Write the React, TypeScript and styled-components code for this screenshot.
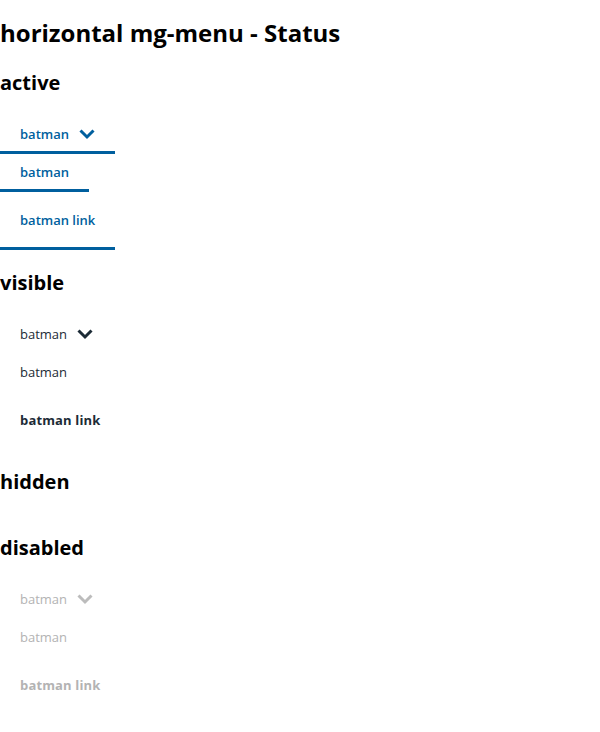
import React from "react";
import styled, { createGlobalStyle, css } from "styled-components";

const GlobalStyle = createGlobalStyle`
  html, body { margin: 0; padding: 0; background: #fff; }
  body { font-family: "Open Sans", "Liberation Sans", sans-serif; color: #000; }
`;

type Status = "active" | "visible" | "disabled";

const colors: Record<Status, string> = {
  active: "#005f9e",
  visible: "#1c2b36",
  disabled: "#b3b3b3",
};

const Page = styled.main`
  display: flex;
  flex-direction: column;
  align-items: flex-start;
  padding-top: 16px;
`;

const Title = styled.h1`
  margin: 0 0 19px;
  font-size: 24px;
  line-height: 34px;
  font-weight: 700;
`;

const Section = styled.section`
  display: flex;
  flex-direction: column;
  align-items: flex-start;
  margin-bottom: 18.5px;
`;

const SectionTitle = styled.h2`
  margin: 0 0 20px;
  font-size: 20px;
  line-height: 27.24px;
  font-weight: 700;
`;

const Menu = styled.nav<{ $hidden?: boolean }>`
  display: ${(p) => (p.$hidden ? "none" : "flex")};
  flex-direction: column;
  align-items: flex-start;
`;

const Item = styled.button<{ $status: Status; $bold?: boolean; $tall?: boolean }>`
  display: flex;
  align-items: center;
  gap: 10px;
  margin: 0;
  padding: ${(p) => (p.$tall ? "19px 20px 18px" : "9px 20px 8px")};
  background: none;
  border: none;
  border-bottom: 3px solid
    ${(p) => (p.$status === "active" ? colors.active : "transparent")};
  font-family: "Open Sans", "Liberation Sans", sans-serif;
  font-size: 13px;
  line-height: 18px;
  color: ${(p) => colors[p.$status]};
  font-weight: ${(p) => (p.$bold ? 700 : p.$status === "active" ? 600 : 400)};
  letter-spacing: ${(p) => (p.$bold ? "0.15px" : "0")};
  text-decoration: none;
  cursor: ${(p) => (p.$status === "disabled" ? "default" : "pointer")};
  ${(p) =>
    p.$status === "disabled" &&
    css`
      pointer-events: none;
    `}
`;

const Chevron = styled.svg<{ $status: Status }>`
  width: 16px;
  height: 16px;
  flex: none;
  color: ${(p) => (p.$status === "disabled" ? "#bcbcbc" : colors[p.$status])};
`;

const ChevronIcon = ({ status }: { status: Status }) => (
  <Chevron $status={status} viewBox="0 0 16 16" aria-hidden="true">
    <path
      d="M1.5 4.5 L8 11 L14.5 4.5"
      fill="none"
      stroke="currentColor"
      strokeWidth="3"
      strokeLinecap="butt"
      strokeLinejoin="miter"
    />
  </Chevron>
);

const StatusMenu = ({ status, hidden }: { status: Status; hidden?: boolean }) => (
  <Menu $hidden={hidden}>
    <Item $status={status} disabled={status === "disabled"}>
      <span>batman</span>
      <ChevronIcon status={status} />
    </Item>
    <Item $status={status} disabled={status === "disabled"}>
      batman
    </Item>
    <Item $status={status} $bold={status !== "active"} $tall as="a">
      batman link
    </Item>
  </Menu>
);

export default function App() {
  return (
    <>
      <GlobalStyle />
      <Page>
        <Title>horizontal mg-menu - Status</Title>
        <Section>
          <SectionTitle>active</SectionTitle>
          <StatusMenu status="active" />
        </Section>
        <Section>
          <SectionTitle>visible</SectionTitle>
          <StatusMenu status="visible" />
        </Section>
        <Section>
          <SectionTitle>hidden</SectionTitle>
          <StatusMenu status="visible" hidden />
        </Section>
        <Section>
          <SectionTitle>disabled</SectionTitle>
          <StatusMenu status="disabled" />
        </Section>
      </Page>
    </>
  );
}
